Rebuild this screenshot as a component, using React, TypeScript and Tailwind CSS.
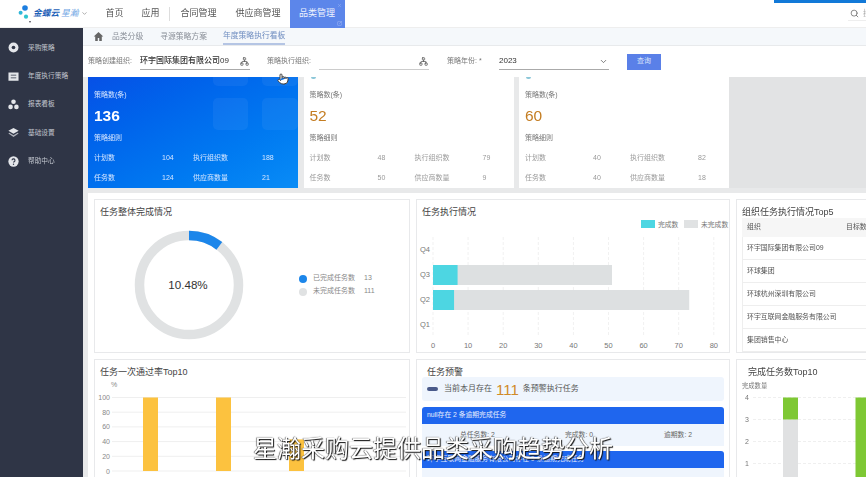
import { ChevronDown, Network, Pointer, Search, X, SquareArrowOutUpRight } from "lucide-react";

const sideItems = [
  { label: "采购策略", icon: "disc" },
  { label: "年度执行策略", icon: "list" },
  { label: "报表看板", icon: "dots" },
  { label: "基础设置", icon: "layers" },
  { label: "帮助中心", icon: "help" },
];

function SideIcon({ name }: { name: string }) {
  return (
    <svg viewBox="0 0 12 12" className="h-[11px] w-[11px] shrink-0 text-[#e4e6ea]" fill="currentColor">
      {name === "disc" && (
        <>
          <circle cx="6" cy="6" r="5.4" />
          <circle cx="6" cy="6" r="2" fill="#2f3546" />
        </>
      )}
      {name === "list" && (
        <path
          fillRule="evenodd"
          d="M0.5 1.5h11v9h-11zM3 4v1h6V4zm0 3v1h6V7z"
        />
      )}
      {name === "dots" && (
        <>
          <circle cx="6" cy="3" r="2.5" />
          <circle cx="2.8" cy="8.6" r="2.5" />
          <circle cx="9.2" cy="8.6" r="2.5" />
        </>
      )}
      {name === "layers" && (
        <>
          <path d="M6 1l5.6 3.2L6 7.4.4 4.2z" />
          <path d="M1.4 6.2L6 8.9l4.6-2.7 1 .9L6 10.8.4 7.1z" opacity=".7" />
        </>
      )}
      {name === "help" && (
        <>
          <circle cx="6" cy="6" r="5.6" />
          <path d="M4.4 4.7A1.6 1.6 0 1 1 6.7 6.2c-.5.3-.7.5-.7 1" fill="none" stroke="#2f3546" strokeWidth="1.2" />
          <circle cx="6" cy="9" r=".75" fill="#2f3546" />
        </>
      )}
    </svg>
  );
}

function Sidebar() {
  return (
    <aside className="flex w-[83px] shrink-0 flex-col gap-[13px] bg-[#2f3546] pl-[8px] pt-[12px]">
      {sideItems.map((item) => (
        <div key={item.label} className="flex h-[15.4px] items-center gap-[9px] text-[6.7px] text-[#c3c7cf]">
          <SideIcon name={item.icon} />
          <span>{item.label}</span>
        </div>
      ))}
    </aside>
  );
}

function Header() {
  return (
    <header className="relative flex h-[28px] shrink-0 items-center border-b border-[#eeeeee] bg-white text-[9px] text-[#555]">
      <svg viewBox="0 0 16 24" className="ml-[17px] h-[24px] w-[16px]">
        <circle cx="8" cy="6" r="2.8" fill="#1d7ee0" />
        <circle cx="3.6" cy="10.7" r="2" fill="#2fb6d8" />
        <circle cx="9" cy="14.7" r="2.1" fill="#2fc5cf" />
        <circle cx="13" cy="19.7" r="0.8" fill="#223" />
      </svg>
      <span className="text-[8.7px] font-bold italic text-[#1d5fb8]">金蝶云</span>
      <span className="ml-[2px] text-[8.7px] italic text-[#6fa6e4]">星瀚</span>
      <ChevronDown className="ml-[3px] h-[7px] w-[7px] text-[#777]" />
      <span className="ml-[17px]">首页</span>
      <span className="ml-[18px]">应用</span>
      <span className="ml-[10px] h-[14px] w-px bg-[#ddd]" />
      <span className="ml-[10px]">合同管理</span>
      <span className="ml-[19px]">供应商管理</span>
      <span className="relative ml-[9px] flex h-[28px] w-[55px] items-center justify-center bg-[#5c86ea] text-[#eef2fd]">
        品类管理
        <X className="absolute right-[3px] top-[3px] h-[5px] w-[5px] text-[#9db6f2]" />
        <SquareArrowOutUpRight className="absolute bottom-[2px] right-[3px] h-[5px] w-[5px] text-[#b5c8f5]" />
      </span>
      <div className="absolute right-0 top-0 h-[3px] w-[92px] bg-[#1279d8]" />
      <div className="absolute left-[848px] top-[8px] flex h-[13px] w-[18px] items-start overflow-hidden border-b border-[#eeeeee]">
        <Search className="ml-[2px] mt-[1px] h-[9px] w-[9px] shrink-0 text-[#666]" />
        <span className="ml-[4px] shrink-0 text-[7.5px] leading-[11px] text-[#aaa]">搜索</span>
      </div>
    </header>
  );
}

function Crumbs() {
  return (
    <div className="flex h-[18px] shrink-0 items-center border-b border-[#e8eaec] bg-[#f5f8fb] pl-[10px] text-[7.8px] text-[#8a8f98]">
      <svg viewBox="0 0 12 12" className="h-[11px] w-[11px]" fill="#666">
        <path d="M6 1L.8 6h1.6v5h2.8V7.6h1.6V11h2.8V6h1.6z" />
      </svg>
      <span className="ml-[8px]">品类分级</span>
      <span className="ml-[17px]">寻源策略方案</span>
      <span className="ml-[16px] flex h-full items-center border-b-2 border-[#b5c5e4] text-[#6f8dc0]">年度策略执行看板</span>
    </div>
  );
}

function Filters() {
  return (
    <div className="flex h-[31px] shrink-0 items-center bg-white pl-[5px] text-[7px] text-[#777]">
      <span className="w-[52px]">策略创建组织:</span>
      <div className="flex h-[17px] w-[110px] items-center justify-between border-b border-[#aaa] pr-[1px] text-[8px] font-medium text-[#333]">
        <span>环宇国际集团有限公司09</span>
        <Network className="h-[9px] w-[9px] text-[#555]" />
      </div>
      <span className="ml-[17px] w-[52px]">策略执行组织:</span>
      <div className="flex h-[17px] w-[110px] items-center justify-end border-b border-[#ccc] pr-[1px]">
        <Network className="h-[9px] w-[9px] text-[#555]" />
      </div>
      <span className="ml-[18px] w-[52px]">策略年份: *</span>
      <div className="flex h-[17px] w-[110px] items-center justify-between border-b border-[#aaa] pr-[1px] text-[8px] text-[#333]">
        <span>2023</span>
        <ChevronDown className="h-[9px] w-[9px] text-[#555]" />
      </div>
      <button className="ml-[18px] h-[16px] w-[34px] bg-[#5a80e8] text-[7px] text-[#dbe5fb]">查询</button>
    </div>
  );
}

type StatCard = {
  total: string;
  plan: string;
  org: string;
  task: string;
  vendor: string;
  blue?: boolean;
};

const statCards: StatCard[] = [
  { total: "136", plan: "104", org: "188", task: "124", vendor: "21", blue: true },
  { total: "52", plan: "48", org: "79", task: "50", vendor: "9" },
  { total: "60", plan: "40", org: "82", task: "40", vendor: "18" },
];

function StatBlock({ card }: { card: StatCard }) {
  const muted = card.blue ? "text-[#d6e6ff] grid-cols-[68px_31px_69px_auto]" : "text-[#9a9a9a] grid-cols-[68px_37px_68px_auto]";
  const label = card.blue ? "text-[#d6e6ff]" : "text-[#777]";
  return (
    <div
      className={`relative w-[210px] shrink-0 overflow-hidden pl-[6px] pt-[11.5px] ${
        card.blue ? "bg-gradient-to-br from-[#0750e6] to-[#0a8cf6]" : "bg-white"
      }`}
    >
      {card.blue && (
        <>
          <div className="absolute left-[125px] top-[21px] h-[32px] w-[35px] rounded-[5px] bg-white/[0.05]" />
          <div className="absolute left-[174px] top-[21px] h-[32px] w-[36px] rounded-[5px] bg-white/[0.05]" />
          <div className="absolute left-[125px] top-0 h-[9px] w-[35px] rounded-b-[5px] bg-white/[0.05]" />
          <div className="absolute left-[174px] top-0 h-[9px] w-[36px] rounded-b-[5px] bg-white/[0.05]" />
        </>
      )}
      {!card.blue && <div className="absolute left-[7px] top-0 h-[2px] w-[5px] rounded-b-full bg-[#8cc7d8]" />}
      <div className={`relative text-[7px] leading-[12px] ${label}`}>策略数(条)</div>
      <div
        className={`relative mt-[6.5px] text-[15.5px] leading-[18px] ${
          card.blue ? "font-bold text-white" : "text-[#c47d22]"
        }`}
      >
        {card.total}
      </div>
      <div className={`relative mt-[7px] text-[7px] leading-[12px] ${label}`}>策略细则</div>
      <div className={`relative mt-[8px] grid gap-y-[8px] text-[7px] leading-[12px] ${muted}`}>
        <span>计划数</span>
        <span>{card.plan}</span>
        <span>执行组织数</span>
        <span>{card.org}</span>
        <span>任务数</span>
        <span>{card.task}</span>
        <span>供应商数量</span>
        <span>{card.vendor}</span>
      </div>
    </div>
  );
}

function Panel({ title, titleClass, children }: { title: string; titleClass?: string; children: React.ReactNode }) {
  return (
    <section className="relative overflow-hidden border border-[#e8e9eb] bg-white">
      <h3 className={`pt-[6px] text-[9px] leading-[13px] text-[#444] ${titleClass ?? "pl-[5px]"}`}>{title}</h3>
      {children}
    </section>
  );
}

function DonutPanel() {
  return (
    <div className="flex items-center pl-[39px] pt-[11px]">
      <svg viewBox="0 0 110 110" className="h-[110px] w-[110px]">
        <circle cx="55" cy="55" r="49.5" fill="none" stroke="#e0e2e3" strokeWidth="9.5" />
        <circle
          cx="55"
          cy="55"
          r="49.5"
          fill="none"
          stroke="#1c86ea"
          strokeWidth="9.5"
          strokeDasharray="32.6 311"
          transform="rotate(-90 55 55)"
        />
        <text x="54" y="59" textAnchor="middle" fontSize="11.6" fill="#333">
          10.48%
        </text>
      </svg>
      <div className="ml-[55px] grid grid-cols-[14px_51px_auto] items-center gap-y-[2.5px] text-[7px] leading-[10.5px] text-[#888]">
        <span className="h-[8px] w-[8px] rounded-full bg-[#1c86ea]" />
        <span>已完成任务数</span>
        <span>13</span>
        <span className="h-[8px] w-[8px] rounded-full bg-[#e0e2e3]" />
        <span>未完成任务数</span>
        <span>111</span>
      </div>
    </div>
  );
}

function ExecChart() {
  const x = (v: number) => 16 + v * 3.51;
  return (
    <svg viewBox="0 0 314 140" className="block h-[140px] w-[314px]" fontSize="7.5" fill="#777">
      <rect x="224" y="6" width="14" height="8" fill="#4dd6e2" />
      <text x="241" y="13" fontSize="6.8">完成数</text>
      <rect x="267" y="6" width="14" height="8" fill="#e0e2e3" />
      <text x="284" y="13" fontSize="6.8">未完成数</text>
      {[0, 10, 20, 30, 40, 50, 60, 70, 80].map((v) => (
        <g key={v}>
          <line x1={x(v)} x2={x(v)} y1="23" y2="121" stroke="#f1f1f1" strokeDasharray="3 2" />
          <text x={x(v)} y="134" textAnchor="middle">{v}</text>
        </g>
      ))}
      {[
        ["Q4", 38],
        ["Q3", 63],
        ["Q2", 88],
        ["Q1", 113],
      ].map(([q, y]) => (
        <text key={q} x="3" y={y}>{q}</text>
      ))}
      <rect x={x(0)} y="51" width={x(51) - x(0)} height="20" fill="#dde0e1" />
      <rect x={x(0)} y="51" width={x(7) - x(0)} height="20" fill="#4dd6e2" />
      <rect x={x(0)} y="76" width={x(73) - x(0)} height="20" fill="#dde0e1" />
      <rect x={x(0)} y="76" width={x(6) - x(0)} height="20" fill="#4dd6e2" />
    </svg>
  );
}

const topOrgs = ["环宇国际集团有限公司09", "环球集团", "环球杭州深圳有限公司", "环宇互联网金融服务有限公司", "集团销售中心"];

function OrgTable() {
  return (
    <div className="ml-[5px] mt-[-1px] text-[6.9px] text-[#555]">
      <div className="flex h-[19px] items-center bg-[#f6f6f6] pl-[5px]">
        <span className="w-[99px]">组织</span>
        <span className="whitespace-nowrap">目标数</span>
      </div>
      {topOrgs.map((org) => (
        <div key={org} className="flex h-[23px] items-center border-b border-l border-[#eee] pl-[4px]">
          {org}
        </div>
      ))}
    </div>
  );
}

function PassRateChart() {
  const y = (v: number) => 37.5 + (100 - v) * 0.735;
  return (
    <svg viewBox="0 0 316 118" className="block h-[118px] w-[316px]" fontSize="7" fill="#888">
      <text x="16" y="27">%</text>
      {[100, 80, 60, 40, 20, 0].map((v) => (
        <g key={v}>
          <line x1="17" x2="311" y1={y(v)} y2={y(v)} stroke="#efefef" />
          <text x="15" y={y(v) + 2.5} textAnchor="end">{v}</text>
        </g>
      ))}
      <rect x="48" y={y(100)} width="15" height="73.5" fill="#fcc23f" />
      <rect x="121" y={y(100)} width="15" height="73.5" fill="#fcc23f" />
      <rect x="194" y={y(43)} width="15" height={43 * 0.735} fill="#fcc23f" />
    </svg>
  );
}

function WarnPanel() {
  return (
    <div className="-mt-[2px] px-[5px] text-[6.8px]">
      <div className="flex h-[24px] items-center rounded-[3px] bg-[#eff5fd] pl-[5px] text-[8px] text-[#555]">
        <span className="h-[4px] w-[11px] rounded-[2px] bg-[#4a5a8a]" />
        <span className="ml-[6px]">当前本月存在</span>
        <span className="mx-[4px] text-[15px] font-medium leading-none text-[#d08a28]">111</span>
        <span>条预警执行任务</span>
      </div>
      <div className="mt-[6px] flex h-[17px] items-center rounded-t-[3px] bg-[#1f66ee] pl-[5px] text-[#e6eefd]">null存在 2 条逾期完成任务</div>
      <div className="grid h-[22px] grid-cols-[105px_99px_auto] items-center bg-[#eff5fd] pl-[38px] text-[#666]">
        <span>总任务数: 2</span>
        <span>完成数: 0</span>
        <span>逾期数: 2</span>
      </div>
      <div className="mt-[5px] flex h-[17px] items-center rounded-t-[3px] bg-[#1f66ee] pl-[5px] text-[#e6eefd]">环宇互联网金融服务有限公司存在 9 条逾期完成任务</div>
      <div className="h-[22px] bg-[#eff5fd]" />
    </div>
  );
}

function DoneChart() {
  const y = (v: number) => 37.5 + (4 - v) * 22;
  return (
    <svg viewBox="0 0 136 118" className="block h-[118px] w-[136px]" fontSize="7" fill="#777">
      <text x="5" y="28" fontSize="6.3">完成数量</text>
      {[4, 3, 2, 1].map((v) => (
        <g key={v}>
          <line x1="16" x2="136" y1={y(v)} y2={y(v)} stroke="#efefef" strokeDasharray="3 2" />
          <text x="12" y={y(v) + 2.5} textAnchor="end">{v}</text>
        </g>
      ))}
      <rect x="46" y={y(3)} width="15" height="60" fill="#e0e1e2" />
      <rect x="46" y={y(4)} width="15" height="22" fill="#7ec834" />
      <rect x="118.5" y={y(4)} width="15" height="82" fill="#7ec834" />
    </svg>
  );
}

export default function App() {
  return (
    <div className="relative flex h-[477px] w-[866px] flex-col overflow-hidden bg-[#e8e9ea] font-['Liberation_Sans','Noto_Sans_CJK_SC',sans-serif]">
      <div className="flex h-full flex-col blur-[0.35px]">
        <Header />
        <div className="flex min-h-0 flex-1">
          <Sidebar />
          <main className="flex min-w-0 flex-1 flex-col">
            <Crumbs />
            <Filters />
            <div className="flex h-[111px] shrink-0 gap-[5.5px] pl-[5px]">
              {statCards.map((card) => (
                <StatBlock key={card.total} card={card} />
              ))}
              <div className="-ml-[5.5px] flex-1 bg-[#e2e3e4]" />
            </div>
            <div className="ml-[5px] mt-[5px] grid flex-1 grid-cols-[316px_314px_136px] grid-rows-[154px_auto] gap-[6px] bg-white pl-[6px] pt-[6px]">
              <Panel title="任务整体完成情况">
                <DonutPanel />
              </Panel>
              <Panel title="任务执行情况">
                <div className="-mt-[5px]">
                  <ExecChart />
                </div>
              </Panel>
              <Panel title="组织任务执行情况Top5">
                <OrgTable />
              </Panel>
              <Panel title="任务一次通过率Top10">
                <div className="-mt-[19px]">
                  <PassRateChart />
                </div>
              </Panel>
              <Panel title="任务预警" titleClass="pl-[10px]">
                <WarnPanel />
              </Panel>
              <Panel title="完成任务数Top10" titleClass="pl-[11px]">
                <div className="-mt-[19px]">
                  <DoneChart />
                </div>
              </Panel>
            </div>
          </main>
        </div>
      </div>
      <Pointer className="absolute left-[277px] top-[72px] h-[14px] w-[12px] fill-white text-[#444]" />
      <div className="absolute left-[253px] top-[434px] whitespace-nowrap text-[24px] leading-[30px] text-white blur-[0.3px] [text-shadow:1px_1px_1px_#111,-0.5px_-0.5px_1px_#333]">
        星瀚采购云提供品类采购趋势分析
      </div>
    </div>
  );
}
